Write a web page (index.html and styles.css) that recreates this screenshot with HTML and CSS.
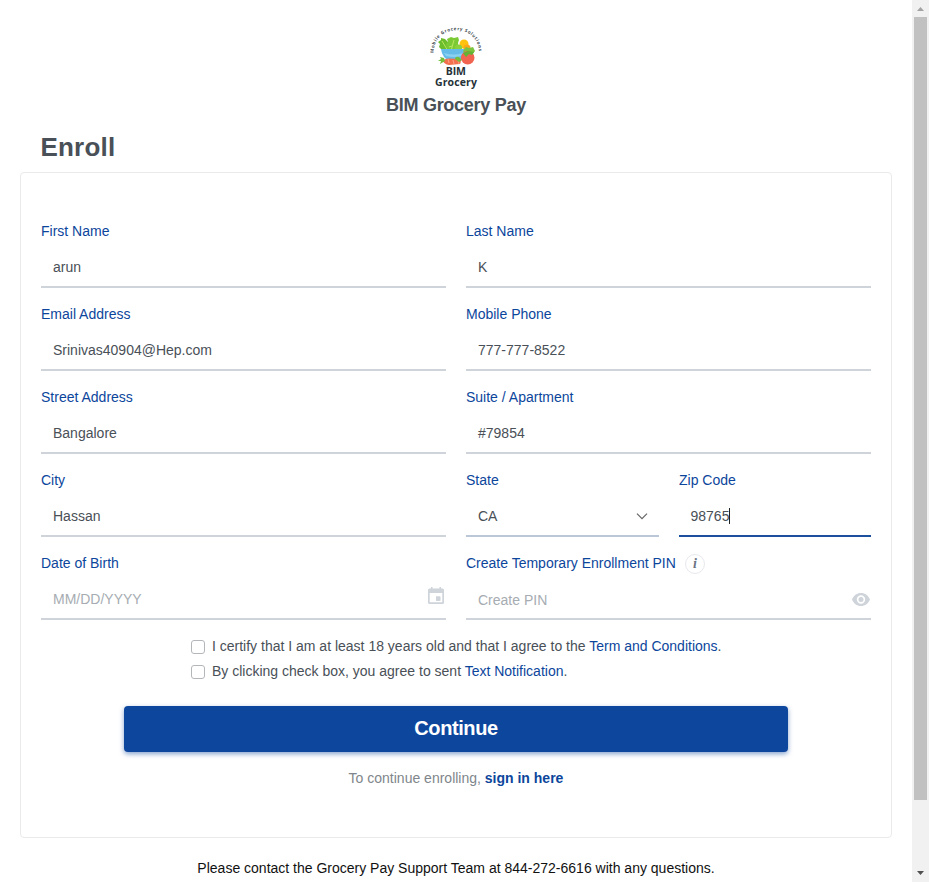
FILE: index.html
```html
<!DOCTYPE html>
<html lang="en">
<head>
<meta charset="utf-8">
<title>BIM Grocery Pay</title>
<link rel="stylesheet" href="styles.css">
</head>
<body>
<div class="page">
  <header class="brand">
    <svg class="logo" width="80" height="70" viewBox="0 0 80 70">
      <path id="arc" d="M17.600 33.500C17.200 20 27 10.200 40.500 10.200S63.400 20 63 34.500" fill="none"/>
      <text class="logo-arc"><textPath href="#arc" startOffset="0.500" textLength="70">Mobile Grocery Solutions</textPath></text>
      <path d="M27 31L23 27 24 24 22 22 25 20 25 18 29 19 32 22 36 31Z" fill="#6cbd2c"/>
      <path d="M32 31L30 24 32 22 31 19 35 17 38 18 42 17 43 20 42 23 43 31Z" fill="#7cc936"/>
      <path d="M35 31L38 20M32 31L26 21M33 27L36 26" stroke="#b9e860" stroke-width="1" fill="none"/>
      <circle cx="48" cy="24" r="4.500" fill="#ffc20e"/>
      <circle cx="42.500" cy="28" r="3.600" fill="#8bd13f"/>
      <circle cx="51" cy="28" r="3.500" fill="#f9a61c"/>
      <path d="M25 29H49Q50 38 44 41H34Q26 38 25 29Z" fill="#66bce9"/>
      <path d="M28 33Q38 36 47 33L45 36Q38 38 30 36Z" fill="#8bd1f2"/>
      <path d="M47 31L50 27 53 28 57 27 59 31 56 35 50 36Z" fill="#7bc43e"/>
      <circle cx="51.700" cy="37.800" r="6.800" fill="#f16450"/>
      <path d="M47 33L52 31 58 32 56 35 53 34 50 37Z" fill="#62b334"/>
      <path d="M27 41Q28 38.500 33 38.500L43 39Q46 41 44 44L33 45Q28 44 27 41Z" fill="#f3704e"/>
      <path d="M32 39L33 43M37 40L38 44M42 40L43 44" stroke="#ffad91" stroke-width=".8"/>
      <path d="M29 41L24 44 25 41 22 41 25 39 24 37 28 38ZM39 39Q39 36 43 37L46 40 43 42Z" fill="#76bd3b"/>
      <text x="39.800" y="54.600" class="logo-name" textLength="20">BIM</text>
      <text x="39.900" y="65.600" class="logo-name" textLength="42">Grocery</text>
    </svg>
    <div class="brand-name">BIM Grocery Pay</div>
  </header>
  <h1>Enroll</h1>
  <main class="card">
    <form class="fields">
      <label class="field"><span class="label">First Name</span><span class="input">arun</span></label>
      <label class="field"><span class="label">Last Name</span><span class="input">K</span></label>
      <label class="field"><span class="label">Email Address</span><span class="input">Srinivas40904@Hep.com</span></label>
      <label class="field"><span class="label">Mobile Phone</span><span class="input">777-777-8522</span></label>
      <label class="field"><span class="label">Street Address</span><span class="input">Bangalore</span></label>
      <label class="field"><span class="label">Suite / Apartment</span><span class="input">#79854</span></label>
      <label class="field"><span class="label">City</span><span class="input">Hassan</span></label>
      <div class="split">
        <label class="field"><span class="label">State</span><span class="input select">CA
          <svg width="12" height="8" viewBox="0 0 12 8"><path d="M1 1.700L6 6.700 11 1.700" fill="none" stroke="#666" stroke-width="1.200"/></svg></span></label>
        <label class="field"><span class="label">Zip Code</span><span class="input focused">98765<i class="caret"></i></span></label>
      </div>
      <label class="field"><span class="label">Date of Birth</span><span class="input empty date">MM/DD/YYYY
        <svg width="16" height="17" viewBox="0 0 16 17"><path fill="#ced4da" fill-rule="evenodd" d="M3 0H4.500V1.500H11.500V0H13V1.500H14.500Q16 1.500 16 3V15.500Q16 17 14.500 17H1.500Q0 17 0 15.500V3Q0 1.500 1.500 1.500H3ZM1.700 6V15.300H14.300V6ZM8 9.500H12.300V13.700H8Z"/><path fill="#ced4da" d="M8 9.500H12.300V13.700H8Z"/></svg></span></label>
      <label class="field"><span class="label">Create Temporary Enrollment PIN<b class="info">i</b></span><span class="input empty pin">Create PIN
        <svg width="18" height="13" viewBox="0 0 18 13"><path fill="#ced4da" fill-rule="evenodd" d="M9 0C4.900 0 1.400 2.700 0 6.500 1.400 10.300 4.900 13 9 13s7.600-2.700 9-6.500C16.600 2.700 13.100 0 9 0Zm0 10.700a4.200 4.200 0 1 1 0-8.400 4.200 4.200 0 0 1 0 8.400ZM9 4a2.500 2.500 0 1 0 0 5 2.500 2.500 0 0 0 0-5Z"/></svg></span></label>
    </form>
    <div class="checks">
      <label class="check"><span class="box"></span><span>I certify that I am at least 18 years old and that I agree to the <a>Term and Conditions</a>.</span></label>
      <label class="check"><span class="box"></span><span>By clicking check box, you agree to sent <a>Text Notification</a>.</span></label>
    </div>
    <button class="continue" type="button">Continue</button>
    <p class="signin">To continue enrolling, <a>sign in here</a></p>
  </main>
  <footer>Please contact the Grocery Pay Support Team at 844-272-6616 with any questions.</footer>
</div>
<div class="scrollbar">
  <svg width="7" height="4" viewBox="0 0 7 4"><path d="M0 4L3.500 0 7 4Z" fill="#a3a3a3"/></svg>
  <div class="thumb"></div>
  <svg class="down" width="7" height="4" viewBox="0 0 7 4"><path d="M0 0L3.500 4 7 0Z" fill="#505050"/></svg>
</div>
</body>
</html>
```
FILE: styles.css
```css
* { box-sizing: border-box; }
body {
  margin: 0;
  height: 882px;
  overflow: hidden;
  display: grid;
  grid-template-columns: 1fr 17px;
  background: #fff;
  color: #495057;
  font: 14px/20px "Liberation Sans", Arial, sans-serif;
}
.page { padding: 20px 20px 0; min-width: 0; }
.brand { display: flex; flex-direction: column; align-items: center; }
.logo { display: block; }
.logo-arc { font: 700 4.4px "Open Sans", sans-serif; fill: #40484f; }
.logo-name { font: 700 10.5px "Open Sans", sans-serif; fill: #263238; text-anchor: middle; }
.brand-name { font-size: 18px; font-weight: 700; line-height: 24px; margin-top: 3px; letter-spacing: -.27px; }
h1 { margin: 14px 0 9px 20.5px; font-size: 26px; line-height: 32px; letter-spacing: .2px; }
.card {
  height: 666px;
  padding: 48px 20px 0;
  border: 1px solid #e9eaeb;
  border-radius: 4px;
}
.fields { display: grid; grid-template-columns: 1fr 1fr; gap: 16px 20px; }
.split { display: grid; grid-template-columns: 193px 1fr; gap: 20px; }
.field { display: flex; flex-direction: column; height: 67px; }
.label { display: flex; height: 20px; color: #0c469c; white-space: nowrap; }
.input {
  display: flex;
  align-items: center;
  height: 47px;
  padding: 6px 12px 0;
  border-bottom: 2px solid #ced4da;
}
.select { justify-content: space-between; padding-right: 11px; border-color: #bbc6d8; }
.focused { border-color: #1c509f; padding-left: 11.500px; }
.caret { width: 1px; height: 16px; margin-left: -.5px; background: #222; }
.empty { color: #a6acb2; justify-content: space-between; }
.date { padding-right: 2px; }
.date svg { margin-top: -7px; }
.pin { padding: 8px 1px 0 12px; }
.info {
  width: 20px;
  height: 20px;
  margin: 1px 0 0 9px;
  border: 1px solid #e7e8ed;
  border-radius: 50%;
  color: #6b7385;
  font: italic 700 14px/17px "Liberation Serif", serif;
  text-align: center;
}
.checks { margin: 16px 0 0 150px; display: grid; gap: 5px; }
.check { display: flex; gap: 7px; white-space: nowrap; }
.box { width: 14px; height: 14px; margin-top: 4px; border: 1px solid #b4b7ba; border-radius: 3px; }
a { color: #0c469c; }
.continue {
  display: block;
  width: 664px;
  height: 46px;
  margin: 25px auto 0;
  border: 0;
  border-radius: 4px;
  background: #0d479d;
  box-shadow: 0 2px 5px rgba(13, 71, 157, .5);
  color: #fff;
  font: 700 20px/44px "Liberation Sans", Arial, sans-serif;
  letter-spacing: -.4px;
  padding: 0 0 2px;
}
.signin { margin: 16px 0 0; text-align: center; color: #80868b; }
.signin a { font-weight: 700; }
footer { margin-top: 20px; text-align: center; color: #111; }
.scrollbar {
  display: flex;
  flex-direction: column;
  align-items: center;
  padding: 7px 0;
  background: #f1f1f1;
}
.thumb { width: 13px; height: 783px; margin-top: 6px; background: #c1c1c1; }
.down { margin-top: auto; }
```
